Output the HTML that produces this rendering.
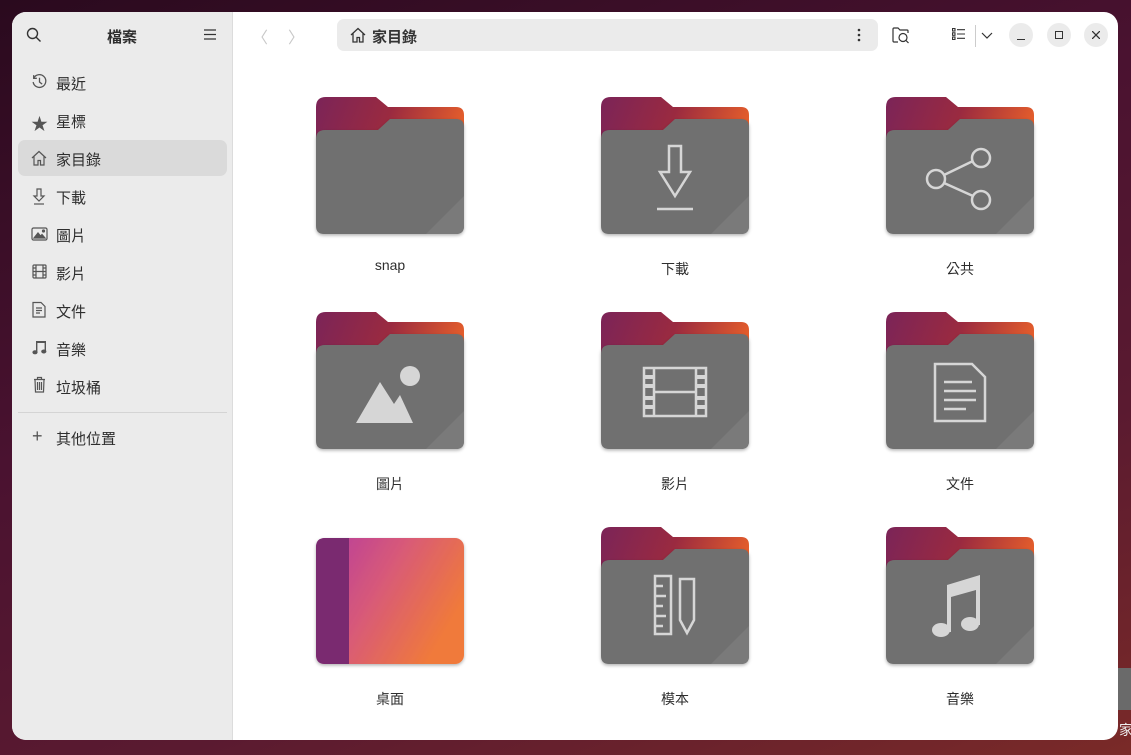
<!DOCTYPE html>
<html><head><meta charset="utf-8"><style>
*{margin:0;padding:0;box-sizing:border-box}
body{width:1131px;height:755px;overflow:hidden;background:linear-gradient(160deg,#2a0a1e 0%,#4a1230 40%,#5a1a30 70%,#7a2a28 100%);font-family:"Liberation Sans","Noto Sans CJK TC",sans-serif;position:relative}
.win{position:absolute;left:12px;top:12px;width:1106px;height:728px;border-radius:14px;overflow:hidden;background:#fff}
.side{position:absolute;left:0;top:0;width:221px;height:728px;background:#ebebeb;border-right:1px solid #dcdcdc}
.t{position:absolute;font-size:15px;color:#2e2e2e;white-space:nowrap}
.ab{position:absolute}
.lbl{position:absolute;font-size:14px;color:#2e2e2e;transform:translateX(-50%);white-space:nowrap}
.circ{position:absolute;width:24px;height:24px;border-radius:50%;background:#ebebeb}
</style></head><body>
<div style="position:absolute;left:1118px;top:668px;width:13px;height:42px;background:#6a6a6a"></div>
<div style="position:absolute;left:1119px;top:720px;font-size:14px;color:#eee">家</div>
<div class="win">
 <div class="side">
  <svg class="ab" style="left:14px;top:15px" width="16" height="16" viewBox="0 0 16 16" fill="none" stroke="#333" stroke-width="1.4"><circle cx="6.5" cy="6.5" r="5"/><path d="M10.2 10.2L14.5 14.5"/></svg>
  <div class="t" style="left:95px;top:14px;font-weight:bold">檔案</div>
  <svg class="ab" style="left:192px;top:17px" width="12" height="11" viewBox="0 0 12 11" stroke="#333" stroke-width="1.2"><path d="M0 1H12M0 5.5H12M0 10H12"/></svg>
  <div class="ab" style="left:6px;top:128px;width:209px;height:36px;background:#dadada;border-radius:7px"></div>
  <svg class="ab" style="left:19px;top:61px" width="17" height="17" viewBox="0 0 16 16" fill="none" stroke="#555" stroke-width="1.2"><path d="M2.5 5A6 6 0 1 1 2 8.5"/><path d="M2.5 2V5H5.5"/><path d="M8 4.5V8.5L10.5 10.5"/></svg>
  <div class="t" style="left:44px;top:61px">最近</div>
  <div class="t" style="left:19px;top:98px;color:#555;font-size:17px">★</div>
  <div class="t" style="left:44px;top:99px">星標</div>
  <svg class="ab" style="left:19px;top:138px" width="16" height="16" viewBox="0 0 16 16" fill="none" stroke="#555" stroke-width="1.2"><path d="M1 8L8 1.5L15 8M3 6.5V15H7V10.5H9.5V15H13V6.5"/></svg>
  <div class="t" style="left:44px;top:137px">家目錄</div>
  <svg class="ab" style="left:20px;top:176px" width="14" height="17" viewBox="0 0 14 17" fill="none" stroke="#555" stroke-width="1.2"><path d="M5 1H9V8H12L7 13L2 8H5Z"/><path d="M2 16H12"/></svg>
  <div class="t" style="left:44px;top:175px">下載</div>
  <svg class="ab" style="left:19px;top:215px" width="17" height="14" viewBox="0 0 17 14" fill="none" stroke="#555" stroke-width="1.2"><rect x="1" y="1" width="15" height="12" rx="1.5"/><path d="M3 11L7 6L9.5 9L11 7.5L14 11Z" fill="#555"/><circle cx="12.5" cy="4" r="1" fill="#555"/></svg>
  <div class="t" style="left:44px;top:213px">圖片</div>
  <svg class="ab" style="left:20px;top:252px" width="15" height="15" viewBox="0 0 15 15" fill="none" stroke="#555" stroke-width="1.2"><rect x="1" y="1" width="13" height="13" rx="1"/><path d="M4 1V14M11 1V14M4 7.5H11M1 4H4M1 7.5H4M1 11H4M11 4H14M11 7.5H14M11 11H14"/></svg>
  <div class="t" style="left:44px;top:251px">影片</div>
  <svg class="ab" style="left:20px;top:289px" width="14" height="17" viewBox="0 0 14 17" fill="none" stroke="#555" stroke-width="1.2"><path d="M1 1.5H9L13 5.5V16H1Z"/><path d="M4 7H10M4 9.5H10M4 12H8"/></svg>
  <div class="t" style="left:44px;top:289px">文件</div>
  <svg class="ab" style="left:20px;top:327px" width="15" height="16" viewBox="0 0 15 16" fill="#555"><path d="M4 2H14V12.5H12.6V4H5.4V13H4Z"/><ellipse cx="3" cy="13.3" rx="2.6" ry="2"/><ellipse cx="11.8" cy="12.5" rx="2.6" ry="2"/></svg>
  <div class="t" style="left:44px;top:327px">音樂</div>
  <svg class="ab" style="left:21px;top:364px" width="13" height="17" viewBox="0 0 13 17" fill="none" stroke="#555" stroke-width="1.2"><path d="M1 3.5H12M4.5 3.5V1.5H8.5V3.5M2 3.5L2.5 16H10.5L11 3.5M4.5 6V14M6.5 6V14M8.5 6V14"/></svg>
  <div class="t" style="left:44px;top:365px">垃圾桶</div>
  <div class="ab" style="left:6px;top:400px;width:209px;height:1px;background:#d4d4d4"></div>
  <div class="t" style="left:20px;top:414px;font-size:18px;color:#555">+</div>
  <div class="t" style="left:44px;top:416px">其他位置</div>
 </div>
 <div class="t" style="left:240px;top:12px;font-size:16px;color:#c8c8c8">〈</div>
 <div class="t" style="left:276px;top:12px;font-size:16px;color:#c8c8c8">〉</div>
 <div class="ab" style="left:325px;top:7px;width:541px;height:32px;background:#ebebeb;border-radius:7px"></div>
 <svg class="ab" style="left:338px;top:15px" width="16" height="16" viewBox="0 0 16 16" fill="none" stroke="#333" stroke-width="1.3"><path d="M1 8L8 1.5L15 8M3 6.5V15H7V10.5H9.5V15H13V6.5"/></svg>
 <div class="t" style="left:360px;top:14px;font-weight:bold;color:#333">家目錄</div>
 <svg class="ab" style="left:845px;top:16px" width="4" height="14" viewBox="0 0 4 14" fill="#333"><circle cx="2" cy="2" r="1.3"/><circle cx="2" cy="7" r="1.3"/><circle cx="2" cy="12" r="1.3"/></svg>
 <svg class="ab" style="left:880px;top:15px" width="18" height="17" viewBox="0 0 18 17" fill="none" stroke="#333" stroke-width="1.2"><path d="M6 15H2Q1 15 1 14V2Q1 1 2 1H6L8 3H15Q16 3 16 4V6"/><circle cx="11" cy="10.5" r="4"/><path d="M14 13.5L16.5 16"/></svg>
 <svg class="ab" style="left:940px;top:16px" width="13" height="12" viewBox="0 0 13 12" fill="none" stroke="#333" stroke-width="1.1"><rect x="0.5" y="0.5" width="2.5" height="2.5"/><rect x="0.5" y="4.8" width="2.5" height="2.5"/><rect x="0.5" y="9" width="2.5" height="2.5"/><path d="M5 1.7H13M5 6H13M5 10.3H13"/></svg>
 <div class="ab" style="left:963px;top:13px;width:1px;height:22px;background:#ccc"></div>
 <svg class="ab" style="left:969px;top:20px" width="12" height="7" viewBox="0 0 12 7" fill="none" stroke="#333" stroke-width="1.2"><path d="M1 1L6 6L11 1"/></svg>
 <div class="circ" style="left:997px;top:11px"></div>
 <div class="ab" style="left:1005px;top:27px;width:8px;height:1.3px;background:#333"></div>
 <div class="circ" style="left:1035px;top:11px"></div>
 <div class="ab" style="left:1043px;top:19px;width:8px;height:8px;border:1.3px solid #333"></div>
 <div class="circ" style="left:1072px;top:11px"></div>
 <svg class="ab" style="left:1080px;top:19px" width="8" height="8" viewBox="0 0 8 8" stroke="#333" stroke-width="1.3"><path d="M0 0L8 8M8 0L0 8"/></svg>
</div>
<svg class="ab" style="left:0;top:0" width="1131" height="755">
 <defs>
  <linearGradient id="g" x1="0" y1="0" x2="1" y2="0.3"><stop offset="0" stop-color="#7b2458"/><stop offset="0.5" stop-color="#9a2a40"/><stop offset="1" stop-color="#e8602a"/></linearGradient>
  <linearGradient id="d" x1="0" y1="0" x2="1" y2="0.5"><stop offset="0" stop-color="#b43aa0"/><stop offset="0.5" stop-color="#d85a78"/><stop offset="1" stop-color="#f07a3a"/></linearGradient>
  <filter id="sh" x="-10%" y="-10%" width="120%" height="125%"><feDropShadow dx="0" dy="1.5" stdDeviation="1.5" flood-color="#000" flood-opacity="0.3"/></filter>
  <g id="f">
   <path d="M0 10Q0 0 10 0H60L72 10H140Q148 10 148 18V110H0Z" fill="url(#g)"/>
   <path d="M0 42Q0 33 9 33H62L74 22H140Q148 22 148 30V129Q148 137 140 137H8Q0 137 0 129Z" fill="#707070" filter="url(#sh)"/>
   <path d="M110 137L148 99V129Q148 137 140 137Z" fill="#7a7a7a"/>
  </g>
 </defs>
 <use href="#f" x="316" y="97"/>
 <use href="#f" x="601" y="97"/>
 <use href="#f" x="886" y="97"/>
 <use href="#f" x="316" y="312"/>
 <use href="#f" x="601" y="312"/>
 <use href="#f" x="886" y="312"/>
 <use href="#f" x="601" y="527"/>
 <use href="#f" x="886" y="527"/>
 <g fill="none" stroke="#d6d6d6" stroke-width="2.5">
  <path d="M669 146H681V172H690L675 196L660 172H669Z"/><path d="M657 209H693"/>
  <circle cx="981" cy="158" r="9"/><circle cx="936" cy="179" r="9"/><circle cx="981" cy="200" r="9"/><path d="M944 175L973 161M944 183L973 196"/>
  <rect x="644" y="368" width="62" height="48"/><path d="M654 368V416M696 368V416M654 392H696"/>
  <path d="M935 364H972L985 377V421H935Z"/><path d="M944 382H972M944 391H976M944 400H976M944 409H966"/>
  <path d="M655 576H671V634H655Z"/><path d="M655 586H663M655 596H666M655 606H663M655 616H666M655 626H663"/>
  <path d="M680 579H694V620L687 633L680 620Z"/>
 </g>
 <g fill="#d6d6d6">
  <path d="M356 423L380 382L394 404L400 395L413 423Z"/><circle cx="410" cy="376" r="10"/>
  <path d="M644 375h10v4h-10zM644 384h10v4h-10zM644 396h10v4h-10zM644 405h10v4h-10zM696 375h10v4h-10zM696 384h10v4h-10zM696 396h10v4h-10zM696 405h10v4h-10z"/>
  <path d="M947 585L980 575V625H976V590L951 597V632H947Z"/>
  <ellipse cx="941" cy="630" rx="9" ry="7"/><ellipse cx="970" cy="624" rx="9" ry="7"/>
 </g>
 <g filter="url(#sh)">
 <rect x="316" y="538" width="148" height="126" rx="9" fill="url(#d)"/>
 <path d="M325 538H349V664H325Q316 664 316 655V547Q316 538 325 538Z" fill="#7a2a70"/>
 </g>
</svg>
<div class="lbl" style="left:390px;top:257px">snap</div>
<div class="lbl" style="left:675px;top:259px">下載</div>
<div class="lbl" style="left:960px;top:259px">公共</div>
<div class="lbl" style="left:390px;top:474px">圖片</div>
<div class="lbl" style="left:675px;top:474px">影片</div>
<div class="lbl" style="left:960px;top:474px">文件</div>
<div class="lbl" style="left:390px;top:689px">桌面</div>
<div class="lbl" style="left:675px;top:689px">模本</div>
<div class="lbl" style="left:960px;top:689px">音樂</div>
</body></html>
